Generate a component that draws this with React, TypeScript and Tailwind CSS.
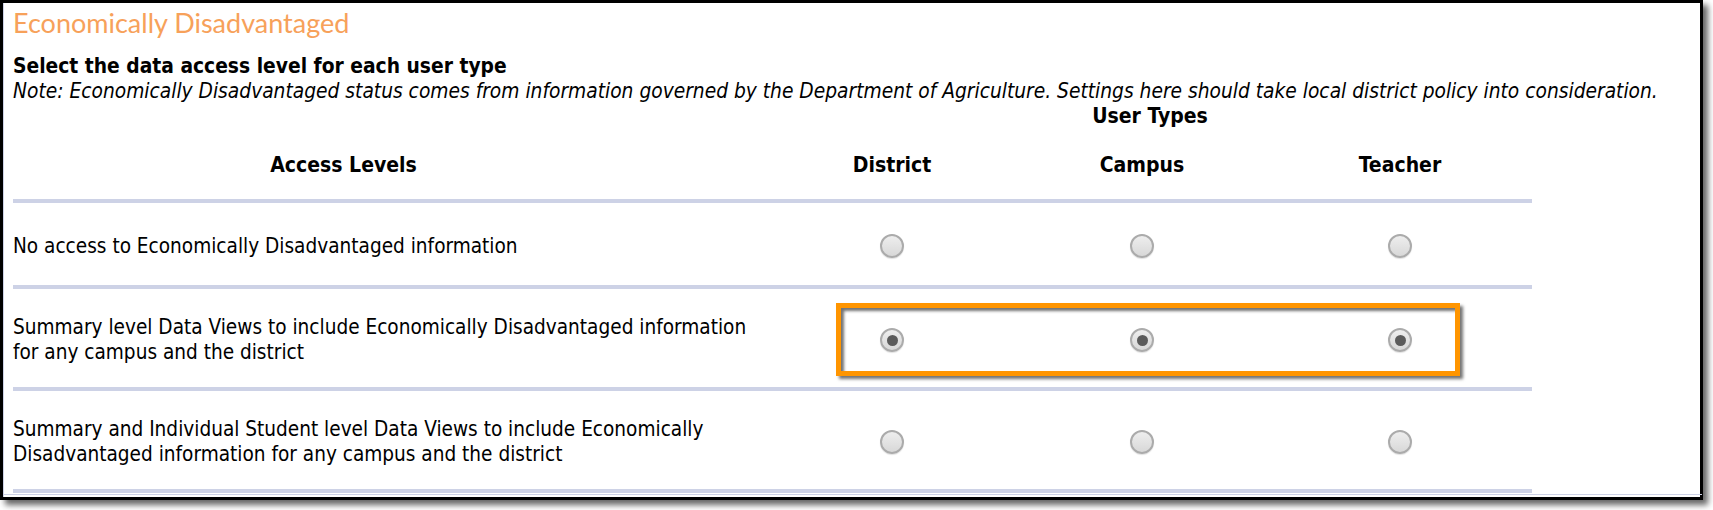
import React from "react";

function Radio({ checked = false }: { checked?: boolean }) {
  return (
    <div className="w-[24px] h-[24px] rounded-full border-2 border-[#ababab] bg-gradient-to-b from-[#eeeeee] to-[#d8d8d8] shadow-[0_1px_1px_rgba(0,0,0,0.12)] flex items-center justify-center">
      {checked && <div className="w-[11px] h-[11px] rounded-full bg-[#5b5b5b]" />}
    </div>
  );
}

function Divider() {
  return <div className="h-[4px] w-[1519px] bg-[#cdd2e6]" />;
}

const rows: { lines: string[]; checked: boolean; h: string }[] = [
  { lines: ["No access to Economically Disadvantaged information"], checked: false, h: "h-[82px]" },
  {
    lines: [
      "Summary level Data Views to include Economically Disadvantaged information",
      "for any campus and the district",
    ],
    checked: true,
    h: "h-[98px]",
  },
  {
    lines: [
      "Summary and Individual Student level Data Views to include Economically",
      "Disadvantaged information for any campus and the district",
    ],
    checked: false,
    h: "h-[98px]",
  },
];

export default function App() {
  return (
    <div className="relative w-[1713px] h-[510px] bg-white overflow-hidden font-['DejaVu_Sans_Condensed','DejaVu_Sans',sans-serif] text-black">
      <div className="w-[1703px] h-[500px] border-[3px] border-black shadow-[5px_5px_6px_rgba(0,0,0,0.6)] bg-white">
        <div className="h-full border-l border-[#cdd2e6] pl-[9px] flex flex-col">
          <div className="pt-[5px] h-[35px] leading-[30px] text-[27px] text-[#f7a15a] font-['Lato',sans-serif]">
            Economically Disadvantaged
          </div>
          <div className="mt-[15px] h-[26px] leading-[26px] text-[20.8px] font-bold whitespace-nowrap">
            Select the data access level for each user type
          </div>
          <div className="h-[24px] leading-[25px] text-[20.75px] italic whitespace-nowrap">
            Note: Economically Disadvantaged status comes from information governed by the Department of Agriculture. Settings here should take local district policy into consideration.
          </div>
          <div className="grid grid-cols-[755px_248px_252px_264px] w-[1519px]">
            <div />
            <div className="col-span-3 h-[26px] leading-[26px] text-[21px] font-bold text-center">User Types</div>
            <div className="mt-[23px] h-[26px] leading-[26px] text-[21px] font-bold pr-[94px] text-center">Access Levels</div>
            <div className="mt-[23px] h-[26px] leading-[26px] text-[21px] font-bold text-center">District</div>
            <div className="mt-[23px] h-[26px] leading-[26px] text-[21px] font-bold text-center">Campus</div>
            <div className="mt-[23px] h-[26px] leading-[26px] text-[21px] font-bold text-center">Teacher</div>
          </div>
          <div className="mt-[21px]">
            <Divider />
            {rows.map((r, i) => (
              <div key={i}>
                <div className={`grid grid-cols-[755px_248px_252px_264px] w-[1519px] items-center ${r.h}`}>
                  <div className="pt-[4px] text-[20.6px] leading-[25px] whitespace-nowrap">
                    {r.lines.map((l, j) => (
                      <div key={j}>{l}</div>
                    ))}
                  </div>
                  <div className="flex justify-center pt-[4px]">
                    <Radio checked={r.checked} />
                  </div>
                  <div className="flex justify-center pt-[4px]">
                    <Radio checked={r.checked} />
                  </div>
                  <div className="flex justify-center pt-[4px]">
                    <Radio checked={r.checked} />
                  </div>
                </div>
                <Divider />
              </div>
            ))}
            <div className="mt-[1px] -ml-[9px] h-[1px] w-[1698px] bg-[#cdd2e6]" />
          </div>
        </div>
      </div>
      <div className="absolute left-[836px] top-[303px] w-[624px] h-[73px] border-[5px] border-[#ff9500] shadow-[3px_3px_3px_rgba(0,0,0,0.55),inset_3px_3px_3px_rgba(0,0,0,0.55)]" />
    </div>
  );
}
